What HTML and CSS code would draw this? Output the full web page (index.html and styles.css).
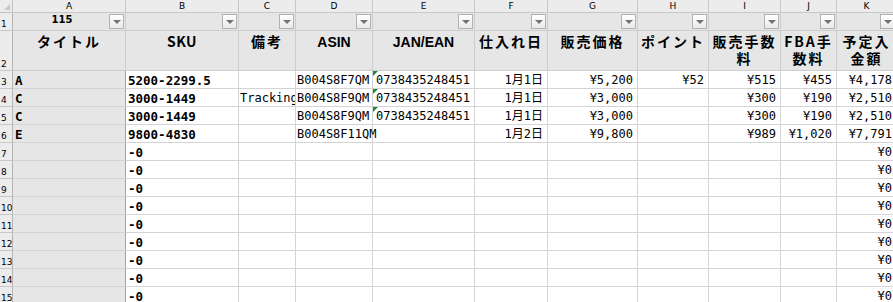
FILE: index.html
```html
<!DOCTYPE html>
<html lang="ja">
<head>
<meta charset="utf-8">
<title>Sheet</title>
<link rel="stylesheet" href="styles.css">
</head>
<body>
<div class="sheet">
  <div class="corner"></div>
  <div class="ch">A</div><div class="ch">B</div><div class="ch">C</div><div class="ch">D</div><div class="ch">E</div><div class="ch">F</div><div class="ch">G</div><div class="ch">H</div><div class="ch">I</div><div class="ch">J</div><div class="ch">K</div>

  <div class="rh">1</div>
  <div class="f cnt">115<span class="btn"></span></div>
  <div class="f"><span class="btn"></span></div>
  <div class="f"><span class="btn"></span></div>
  <div class="f"><span class="btn"></span></div>
  <div class="f"><span class="btn"></span></div>
  <div class="f"><span class="btn"></span></div>
  <div class="f"><span class="btn"></span></div>
  <div class="f"><span class="btn"></span></div>
  <div class="f"><span class="btn"></span></div>
  <div class="f"><span class="btn"></span></div>
  <div class="f"><span class="btn"></span></div>

  <div class="rh">2</div>
  <div class="h">タイトル</div>
  <div class="h sku">SKU</div>
  <div class="h">備考</div>
  <div class="h lat">ASIN</div>
  <div class="h lat">JAN/EAN</div>
  <div class="h">仕入れ日</div>
  <div class="h">販売価格</div>
  <div class="h">ポイント</div>
  <div class="h">販売手数<br>料</div>
  <div class="h">FBA手<br>数料</div>
  <div class="h">予定入<br>金額</div>

  <div class="rh">3</div>
  <div class="a b">A</div><div class="c b">5200-2299.5</div><div class="c"></div><div class="c d">B004S8F7QM</div><div class="c t">0738435248451</div><div class="c r">1月1日</div><div class="c r">¥5,200</div><div class="c r">¥52</div><div class="c r">¥515</div><div class="c r">¥455</div><div class="c r">¥4,178</div>

  <div class="rh">4</div>
  <div class="a b">C</div><div class="c b">3000-1449</div><div class="c tr">Tracking</div><div class="c d">B004S8F9QM</div><div class="c t">0738435248451</div><div class="c r">1月1日</div><div class="c r">¥3,000</div><div class="c r"></div><div class="c r">¥300</div><div class="c r">¥190</div><div class="c r">¥2,510</div>

  <div class="rh">5</div>
  <div class="a b">C</div><div class="c b">3000-1449</div><div class="c"></div><div class="c d">B004S8F9QM</div><div class="c t">0738435248451</div><div class="c r">1月1日</div><div class="c r">¥3,000</div><div class="c r"></div><div class="c r">¥300</div><div class="c r">¥190</div><div class="c r">¥2,510</div>

  <div class="rh">6</div>
  <div class="a b">E</div><div class="c b">9800-4830</div><div class="c"></div><div class="c d ov">B004S8F11QM</div><div class="c"></div><div class="c r">1月2日</div><div class="c r">¥9,800</div><div class="c r"></div><div class="c r">¥989</div><div class="c r">¥1,020</div><div class="c r">¥7,791</div>

  <div class="rh">7</div>
  <div class="a"></div><div class="c b">-0</div><div class="c"></div><div class="c"></div><div class="c"></div><div class="c"></div><div class="c"></div><div class="c"></div><div class="c"></div><div class="c"></div><div class="c r">¥0</div>

  <div class="rh">8</div>
  <div class="a"></div><div class="c b">-0</div><div class="c"></div><div class="c"></div><div class="c"></div><div class="c"></div><div class="c"></div><div class="c"></div><div class="c"></div><div class="c"></div><div class="c r">¥0</div>

  <div class="rh">9</div>
  <div class="a"></div><div class="c b">-0</div><div class="c"></div><div class="c"></div><div class="c"></div><div class="c"></div><div class="c"></div><div class="c"></div><div class="c"></div><div class="c"></div><div class="c r">¥0</div>

  <div class="rh">10</div>
  <div class="a"></div><div class="c b">-0</div><div class="c"></div><div class="c"></div><div class="c"></div><div class="c"></div><div class="c"></div><div class="c"></div><div class="c"></div><div class="c"></div><div class="c r">¥0</div>

  <div class="rh">11</div>
  <div class="a"></div><div class="c b">-0</div><div class="c"></div><div class="c"></div><div class="c"></div><div class="c"></div><div class="c"></div><div class="c"></div><div class="c"></div><div class="c"></div><div class="c r">¥0</div>

  <div class="rh">12</div>
  <div class="a"></div><div class="c b">-0</div><div class="c"></div><div class="c"></div><div class="c"></div><div class="c"></div><div class="c"></div><div class="c"></div><div class="c"></div><div class="c"></div><div class="c r">¥0</div>

  <div class="rh">13</div>
  <div class="a"></div><div class="c b">-0</div><div class="c"></div><div class="c"></div><div class="c"></div><div class="c"></div><div class="c"></div><div class="c"></div><div class="c"></div><div class="c"></div><div class="c r">¥0</div>

  <div class="rh">14</div>
  <div class="a"></div><div class="c b">-0</div><div class="c"></div><div class="c"></div><div class="c"></div><div class="c"></div><div class="c"></div><div class="c"></div><div class="c"></div><div class="c"></div><div class="c r">¥0</div>

  <div class="rh">15</div>
  <div class="a"></div><div class="c b">-0</div><div class="c"></div><div class="c"></div><div class="c"></div><div class="c"></div><div class="c"></div><div class="c"></div><div class="c"></div><div class="c"></div><div class="c r">¥0</div>
</div>
</body>
</html>
```

FILE: styles.css
```css
* { box-sizing: border-box; }
html, body { margin: 0; padding: 0; background: #fff; }
body { width: 893px; height: 302px; overflow: hidden; }

.sheet {
  display: grid;
  grid-template-columns: 13px 113px 113px 57px 77px 102px 73px 90px 71px 72px 56px 60px;
  grid-template-rows: 13px 18px 40px repeat(13, 18px);
  font-family: "DejaVu Sans Mono", "Noto Sans CJK JP", monospace;
  font-size: 12px;
  color: #000;
}

.sheet > div {
  position: relative;
  display: flex;
  align-items: flex-end;
  overflow: hidden;
  white-space: nowrap;
  padding: 0 2px;
  line-height: 15px;
  border-right: 1px solid #d4d4d4;
  border-bottom: 1px solid #d4d4d4;
}

.sheet > .corner {
  background: #ececec;
  border-color: #c4c4c4;
}
.corner::after {
  content: "";
  position: absolute;
  right: 2px;
  bottom: 2px;
  border-left: 6px solid transparent;
  border-bottom: 6px solid #c8c8c8;
}

.sheet > .ch {
  background: #ececec;
  border-color: #c8c8c8;
  justify-content: center;
  align-items: center;
  font-family: "DejaVu Sans", sans-serif;
  font-size: 9px;
  line-height: 12px;
}

.sheet > .rh {
  background: #ececec;
  border-right-color: #b4b4b4;
  border-bottom-color: #c8c8c8;
  font-family: "DejaVu Sans", sans-serif;
  font-size: 9px;
  line-height: 11px;
  padding-left: 1px;
}

.sheet > .f {
  background: #e6e6e6;
  border-color: #cdcdcd;
}
.sheet > .cnt {
  justify-content: center;
  align-items: flex-start;
  font-family: "DejaVu Sans", sans-serif;
  font-weight: bold;
  font-size: 10px;
  line-height: 12px;
  padding-right: 16px;
  padding-top: 1px;
}

.btn {
  position: absolute;
  right: 1px;
  top: 1px;
  width: 15px;
  height: 15px;
  border: 1px solid #b1b1b1;
  background: linear-gradient(#ffffff, #e9e9e9);
}
.btn::after {
  content: "";
  position: absolute;
  left: 3px;
  top: 5px;
  border-left: 4px solid transparent;
  border-right: 4px solid transparent;
  border-top: 4px solid #727272;
}

.sheet > .h {
  background: #e6e6e6;
  border-color: #cdcdcd;
  align-items: flex-start;
  justify-content: center;
  text-align: center;
  white-space: normal;
  font-family: "Noto Sans CJK JP", sans-serif;
  font-weight: bold;
  font-size: 14px;
  line-height: 17px;
  letter-spacing: 2px;
  padding-top: 2px;
}
.sheet > .h.sku { letter-spacing: 0.5px; }
.sheet > .h.lat {
  font-family: "Liberation Sans", "Noto Sans CJK JP", sans-serif;
  font-size: 14px;
  letter-spacing: 0;
  padding-top: 3px;
}

.sheet > .a {
  background: #e6e6e6;
  border-right-color: #a4a4a4;
}

.b { font-weight: bold; font-size: 12.5px; }
.sheet > .d { padding-left: 1px; }
.sheet > .ov { overflow: visible; z-index: 1; }
.sheet > .tr { padding-left: 1px; }
.sheet > .r { justify-content: flex-end; padding-right: 4px; }

.sheet > .t { padding-left: 3px; }
.t::before {
  content: "";
  position: absolute;
  left: 0;
  top: 0;
  border-top: 5px solid #1f8a3b;
  border-right: 5px solid transparent;
}
```
